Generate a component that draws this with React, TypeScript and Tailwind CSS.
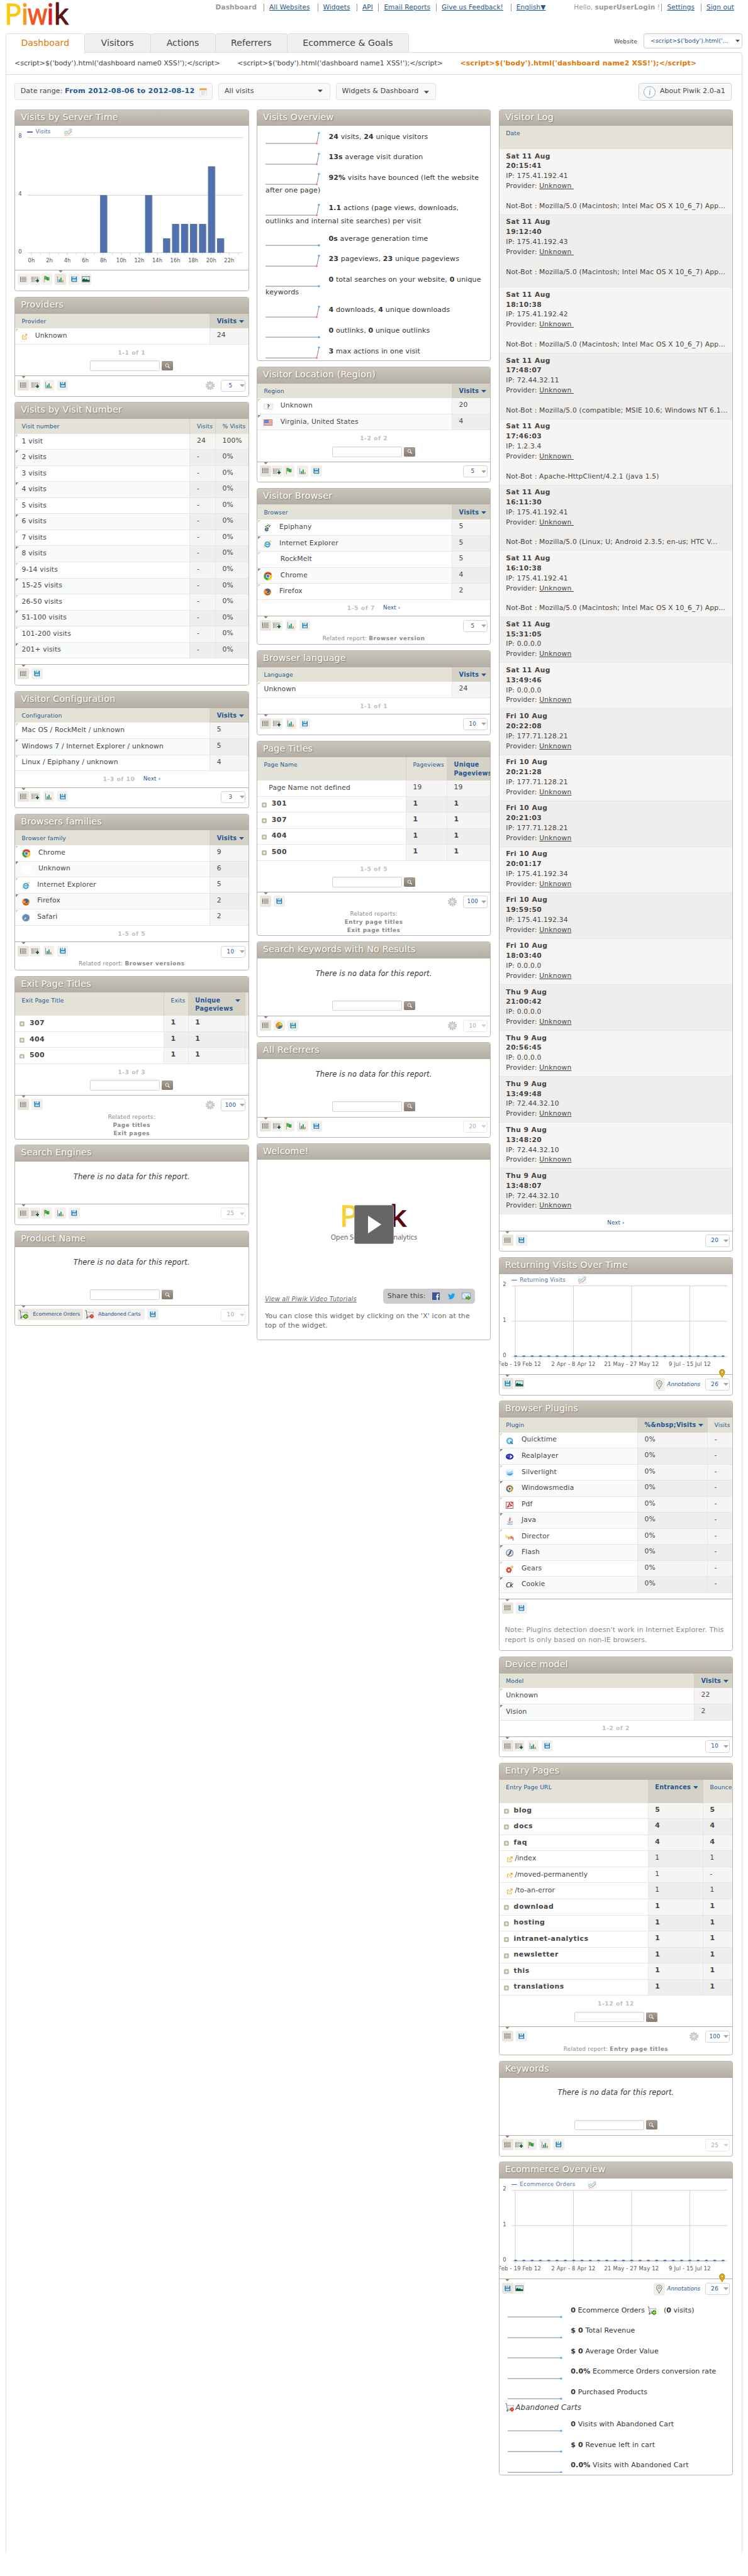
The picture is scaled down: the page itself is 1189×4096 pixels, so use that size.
import React from "react";
import type { ReactNode } from "react";

/* ---------- small drawings ---------- */

const ListIcon = () => (
  <svg width="12" height="10" viewBox="0 0 12 10">
    {[0, 2, 4, 6, 8].map((y) => (
      <g key={y}>
        <rect x="0" y={y + 0.3} width="1.2" height="1.2" fill="#222" />
        <rect x="2" y={y + 0.4} width="10" height="1" fill="#8b7f76" />
      </g>
    ))}
  </svg>
);
const ListPlusIcon = () => (
  <svg width="14" height="12" viewBox="0 0 14 12">
    {[1, 3, 5, 7, 9].map((y) => (
      <g key={y}>
        <rect x="0.5" y={y + 0.3} width="1.2" height="1.2" fill="#222" />
        <path d={`M2.7 ${y + 0.9}H${y > 4 ? 7 : 13}`} stroke="#8b7f76" strokeWidth="1" strokeDasharray="2.4 .7" />
      </g>
    ))}
    <path d="M10.8 5.2v6.2M7.7 8.3h6.2" stroke="#00502a" strokeWidth="2.1" />
  </svg>
);
const FlagIcon = () => (
  <svg width="12" height="13" viewBox="0 0 12 13">
    <path d="M1.5 0.5V12.5" stroke="#c3a57c" strokeWidth="1.3" />
    <path d="M2.2 1.2C4 .2 5 1 6.400 2.400C7.600 3.400 9 3.400 10.800 2.600V8.400C9 9.600 7.400 9.200 6 8.200C4.600 7.200 3.600 7 2.200 7.800Z" fill="#49b04b" />
    <path d="M6.400 3v5.400l1.800.8V3.600Z" fill="#2c8f3a" />
  </svg>
);
const BarIcon = () => (
  <svg width="12" height="12" viewBox="0 0 12 12">
    <path d="M.6 0.500V11.300H12" stroke="#8b7f76" strokeWidth="1" fill="none" />
    <rect x="2.600" y="6" width="2.200" height="4.600" fill="#0d8fd0" />
    <rect x="5.600" y="3" width="2.200" height="7.600" fill="#2ea150" />
    <rect x="9" y="7.600" width="2" height="3" fill="#f0811c" />
  </svg>
);
const SaveIcon = () => (
  <svg width="11" height="11" viewBox="0 0 11 11">
    <path d="M.5.500H2.500V4H8.300V.500H10.500V10.500H1.600L.5 9.400Z" fill="#1185c4" />
    <rect x="4.300" y=".5" width="1.300" height="2.300" fill="#1185c4" />
    <rect x="2.200" y="5.800" width="6.800" height="3.500" fill="#d6d3cb" />
  </svg>
);
const ImageIcon = () => (
  <svg width="15" height="11" viewBox="0 0 15 11">
    <rect x=".6" y=".6" width="13.800" height="9.800" fill="#c4e6f6" stroke="#94887c" strokeWidth="1.200" />
    <path d="M1.200 6.500L4 4.300L6.500 6.500L8.500 5L11 7.500L13.800 6.500V9.900H1.200Z" fill="#0a5a34" />
  </svg>
);
const PieIcon = () => (
  <svg width="13" height="13" viewBox="0 0 13 13">
    <circle cx="6.500" cy="6.500" r="5.700" fill="#f79320" stroke="#8d7a52" strokeWidth=".8" />
    <path d="M6.500 6.500V.900A5.600 5.600 0 0 1 12 6.500Z" fill="#f6cf1e" />
    <path d="M6.500 6.500H12A5.600 5.600 0 0 1 4 11.500Z" fill="#1380b8" />
  </svg>
);
const PinIcon = ({ gold }: { gold?: boolean }) => (
  <svg width="11" height="16" viewBox="0 0 11 16">
    <path
      d="M5.500 15.200C4.600 12 .7 8.800 .7 5.300A4.800 4.800 0 0 1 10.300 5.300C10.300 8.800 6.400 12 5.500 15.200Z"
      fill={gold ? "#e3ad07" : "#fff"}
      stroke={gold ? "#a97c05" : "#555"}
    />
    <circle cx="5.500" cy="5.200" r="2.100" fill="#fff" stroke={gold ? "#a97c05" : "#666"} strokeWidth=".9" />
    {!gold && <path d="M2 8l3.500 3L9 8" stroke="#aaa" fill="none" strokeWidth=".8" />}
  </svg>
);
const GearIcon = () => (
  <svg width="16" height="16" viewBox="0 0 16 16">
    <circle cx="8" cy="8" r="6.700" fill="none" stroke="#b9b9b9" strokeWidth="2.400" strokeDasharray="2.500 1.700" />
    <circle cx="8" cy="8" r="4.600" fill="#e3e3e3" stroke="#c4c4c4" strokeWidth="2" />
    <circle cx="8" cy="8" r="2" fill="#fff" stroke="#bbb" strokeWidth=".7" />
  </svg>
);
const CartIcon = ({ bad }: { bad?: boolean }) => (
  <svg width="17" height="16" viewBox="0 0 17 16" className="shrink-0">
    <path d="M.5 1H2.500L4 12.500H9" fill="none" stroke="#5a5f66" strokeWidth="1.100" />
    <path d="M3 4H15.500L14.500 10H4Z" fill="#eef1f4" stroke="#8a929b" strokeWidth="1" strokeDasharray="1.500 .7" />
    <circle cx="3.800" cy="14" r="1.500" fill="#777" />
    {bad ? (
      <>
        <path d="M10 9.200l4.600 4.600M14.600 9.200l-4.600 4.600" stroke="#b3200e" strokeWidth="4.200" />
        <path d="M10 9.200l4.600 4.600M14.600 9.200l-4.600 4.600" stroke="#f4604a" strokeWidth="2" />
      </>
    ) : (
      <>
        <path d="M12.300 7.300v8.400M8.100 11.500h8.400" stroke="#0b7a0b" strokeWidth="4" />
        <path d="M12.300 8.300v6.400M9.100 11.500h6.400" stroke="#b6e61c" strokeWidth="1.800" />
      </>
    )}
  </svg>
);
const EvoIcon = () => (
  <svg width="16" height="16" viewBox="0 0 16 16">
    <path d="M.6 2L12.500 .8 15.400 3 15.400 13.600 2.500 15.300Z" fill="#fafafa" stroke="#ddd" strokeWidth=".7" />
    <path d="M1 8.500L5 6.500 8 7.500 13 2.500 15 3.500" stroke="#a6d58e" strokeWidth="1.500" fill="none" />
    <path d="M1.500 11L6 9.500 10 10.500 15 6.500" stroke="#8fc4ef" strokeWidth="1.400" fill="none" />
    <path d="M2 14L6 12.800 9 12.500 12 9 14 4" stroke="#f3a982" strokeWidth="1.200" fill="none" />
  </svg>
);
const LinkIcon = () => (
  <svg width="10" height="10" viewBox="0 0 10 10">
    <path d="M4.500 2.500H.7V9.300H7.500V6" fill="none" stroke="#e9b13a" strokeWidth="1.200" />
    <path d="M6 .7H9.400V4M9 1L4.500 5.500" fill="none" stroke="#e9a51f" strokeWidth="1.200" />
    <path d="M2.500 4.500h2.500v2.500h-2.500z" fill="#f7dfa6" />
  </svg>
);
const PlusBox = () => (
  <svg width="9" height="9" viewBox="0 0 9 9">
    <rect width="9" height="9" rx="2" fill="#bfbba4" />
    <path d="M4.500 2v5M2 4.500h5" stroke="#fff" strokeWidth="1.200" />
  </svg>
);
const ChromeIcon = () => (
  <svg width="16" height="16" viewBox="0 0 16 16">
    <circle cx="8" cy="8" r="7.500" fill="#f9c921" />
    <path d="M8 8L1.500 4.200A7.500 7.500 0 0 1 14.800 4.800Z" fill="#e23a2c" />
    <path d="M8 8L1.500 4.200A7.500 7.500 0 0 0 7 15.450L10.500 9Z" fill="#37a748" />
    <circle cx="8" cy="8" r="3.600" fill="#fff" />
    <circle cx="8" cy="8" r="2.800" fill="#3f7fd8" />
  </svg>
);
const IEIcon = () => (
  <svg width="14" height="14" viewBox="0 0 14 14">
    <path d="M11 9.200A4.300 4.300 0 1 1 11.300 7.300H4.500" fill="none" stroke="#2ea3e8" strokeWidth="2.300" />
    <path d="M1.500 12.800C-.5 10 5 2.500 12.800 1.200C13.600 2 13 3.300 12.400 4" fill="none" stroke="#f3b61f" strokeWidth="1.100" />
  </svg>
);
const FirefoxIcon = () => (
  <svg width="14" height="14" viewBox="0 0 14 14">
    <circle cx="7" cy="7" r="6.500" fill="#e0731c" />
    <circle cx="7.500" cy="5.500" r="4" fill="#3a64a8" />
    <path d="M1 5C3 4 4.500 5 6.500 5.200C8 6.500 6 7.500 5.500 8.500C8 10 10.500 9 11.500 6C12.500 9.500 10 12.500 7 13C3 12.800 .8 9 1 5Z" fill="#ef9a28" />
    <path d="M3 9.500C5 12 9 12 11 10" stroke="#a83c12" strokeWidth="1.300" fill="none" />
  </svg>
);
const SafariIcon = () => (
  <svg width="14" height="14" viewBox="0 0 14 14">
    <circle cx="7" cy="7" r="6.200" fill="#4f93cf" stroke="#8d949b" strokeWidth="1.300" />
    <path d="M10.500 3L8 8 6 6Z" fill="#dc5a4a" />
    <path d="M3.500 11L8 8 6 6Z" fill="#eee" />
  </svg>
);
const EpiphanyIcon = () => (
  <svg width="14" height="14" viewBox="0 0 14 14">
    <path d="M8.500 11.500C5 13.500 2 11.500 3.200 8.800C4 7 8 6.500 8.300 8.600C8 10 5.500 10 4.500 9.500" fill="none" stroke="#3c5560" strokeWidth="1.700" />
    <path d="M3 5.500l2-1.500M5.500 4l2-1.500M8 3l2-1.500" stroke="#4e9a3a" strokeWidth="1.900" />
    <path d="M9 6l3.500-4" stroke="#3c5560" strokeWidth="1.300" />
  </svg>
);
const BlankIcon = () => <span className="block h-[16px] w-[16px] bg-white" />;
const UnknownFlag = () => (
  <span className="flex h-[11px] w-[16px] items-center justify-center border border-[#ddd] bg-[#f6f6f6] text-[9px] font-bold leading-none tracking-normal text-[#444]">
    ?
  </span>
);
const USFlag = () => (
  <svg width="16" height="11" viewBox="0 0 16 11">
    <rect width="16" height="11" fill="#fff" />
    {[0, 2, 4, 6, 8, 10].map((y) => (
      <rect key={y} y={y} width="16" height="1" fill={y % 10 === 0 ? "#d9542e" : "#e8503c"} />
    ))}
    <rect x="1" y="1" width="8" height="5.500" fill="#4a7be0" />
    <path d="M1.500 2.500H9M1.500 4.500H9" stroke="#cfdcf8" strokeWidth=".7" strokeDasharray="1 1" />
    <rect x=".3" y=".3" width="15.400" height="10.400" fill="none" stroke="#c9674a" strokeWidth=".6" />
  </svg>
);

const plugin: Record<string, ReactNode> = {
  Quicktime: (
    <>
      <circle cx="7" cy="7" r="4.800" fill="#cfeaf8" stroke="#5fb2d9" strokeWidth="2.600" />
      <path d="M8 8l4.500 4.500" stroke="#2f87b5" strokeWidth="2.500" />
    </>
  ),
  Realplayer: (
    <>
      <ellipse cx="7" cy="7" rx="7" ry="5.300" fill="#2a2fa8" />
      <path d="M7.500 3.500L12 7 7.500 10.500Z" fill="#fff" />
      <path d="M1.500 6C3.500 3 7 3 8.500 6C7.500 9 3.500 9 1.500 6Z" fill="#4c54d8" />
    </>
  ),
  Silverlight: (
    <>
      <rect width="14" height="14" fill="#e4f3fc" />
      <path d="M.5 4L6 6 13.500 2.500 10 8 4 9Z" fill="#8fcdf2" />
      <path d="M1 8C4 9 10 9 13.500 6C12 12 6 14 1 8Z" fill="#3e9fdc" />
    </>
  ),
  Windowsmedia: (
    <>
      <circle cx="7" cy="7" r="6.300" fill="#e9a21c" />
      <path d="M7 .7A6.300 6.300 0 0 0 .7 7H7Z" fill="#d9532c" />
      <path d="M.7 7A6.300 6.300 0 0 0 7 13.300V7Z" fill="#2f68b8" />
      <path d="M7 .7A6.300 6.300 0 0 1 13.300 7H7Z" fill="#69a83a" />
      <circle cx="7" cy="7" r="4" fill="#f4f4f4" stroke="#666" strokeWidth=".7" />
      <path d="M5.800 4.800L9.500 7 5.800 9.200Z" fill="#333" />
    </>
  ),
  Pdf: (
    <>
      <rect x=".7" y="1.500" width="12.600" height="11.500" fill="#f8e9e9" stroke="#b06a70" strokeWidth="1.200" />
      <path d="M2.500 11C5 8 6.500 5 6.500 2.500C7 6 9 8 12 8C8 8 5 9 2.500 11ZM9 1l3 2-2 2" fill="none" stroke="#b5303a" strokeWidth="1.300" />
    </>
  ),
  Java: (
    <>
      <path d="M7.500 .5C8.500 3 4.500 4 6.500 7.500M9.500 3C7 4 8.500 5.500 7.500 7.500" fill="none" stroke="#dd6150" strokeWidth="1.300" />
      <path d="M3.500 8.500C5 9.500 8.500 9.500 10 8.500M4 10.500C6 11.500 8 11.500 10 10.500M2 12.500C5 14 10 14 12.500 12.500M10.500 8C13 8 12 10 10.500 10.300" fill="none" stroke="#7d88b8" strokeWidth="1.100" />
    </>
  ),
  Director: (
    <>
      <path d="M.7 2.500v6M3 5v4" stroke="#f2c500" strokeWidth="1.300" />
      <path d="M5.200 6v5M7.500 6v4" stroke="#f08019" strokeWidth="1.300" />
      <path d="M9.500 5v5M11.500 5v5M13.300 7v6" stroke="#d22b20" strokeWidth="1.200" />
    </>
  ),
  Flash: (
    <>
      <circle cx="7" cy="7" r="6.200" fill="#dce6ee" stroke="#6f8190" strokeWidth="1.300" />
      <path d="M10.500 3C7 3 7.500 7 6.500 9C6 10.300 5 10.800 3.800 10.800M6.500 7H9.500" fill="none" stroke="#33414d" strokeWidth="1.700" />
    </>
  ),
  Gears: (
    <>
      <circle cx="5.500" cy="8.500" r="3.200" fill="#fff" stroke="#dd4434" strokeWidth="2.400" />
      <circle cx="5.500" cy="8.500" r="4.700" fill="none" stroke="#dd4434" strokeWidth="1.400" strokeDasharray="2 1.700" />
      <circle cx="11.300" cy="3" r="1.600" fill="#fff" stroke="#edb63a" strokeWidth="1.500" />
    </>
  ),
};
const PluginIcon = ({ name }: { name: string }) =>
  name === "Cookie" ? (
    <span className="block w-[14px] text-[11px] italic leading-none tracking-[-0.8px] text-black">Ck</span>
  ) : (
    <svg width="14" height="14" viewBox="0 0 14 14">
      {plugin[name]}
    </svg>
  );

/* ---------- widget pieces ---------- */

const Tri = ({ className }: { className: string }) => (
  <svg width="9" height="5" viewBox="0 0 9 5" className={className}>
    <path d="M0 0H9L4.500 5Z" fill="currentColor" />
  </svg>
);

function Widget({ title, size, children }: { title: string; size: string; children: ReactNode }) {
  return (
    <section className={`mb-[10px] flex flex-col overflow-hidden rounded-[4px] border border-[#b9b5a8] bg-white ${size}`}>
      <h2 className="h-[29px] shrink-0 bg-linear-to-b from-[#cbc6bb] to-[#b3ada4] pl-[10.500px] text-[16.200px] leading-[26px] tracking-[0.220px] text-white [text-shadow:1px_1px_2px_#7b7363]">
        {title}
      </h2>
      {children}
    </section>
  );
}

const icons: Record<string, ReactNode> = {
  list: <ListIcon />,
  plus: <ListPlusIcon />,
  flag: <FlagIcon />,
  bar: <BarIcon />,
  save: <SaveIcon />,
  image: <ImageIcon />,
  pie: <PieIcon />,
};

const Limit = ({ value, dim }: { value: string; dim?: boolean }) => (
  <div className={`flex h-[22px] w-[44px] items-center rounded-[4px] border border-[#d4d4d4] text-[#255792] ${dim ? "opacity-50" : ""}`}>
    <span className="w-[32px] text-center text-[10px] tracking-[0.300px]">{value}</span>
    <Tri className="text-[#a5a5a5]" />
  </div>
);

function Footer({
  groups,
  active = "list",
  limit,
  dim,
  gear,
  notes,
  related,
}: {
  groups: string[][];
  active?: string;
  limit?: string;
  dim?: boolean;
  gear?: boolean;
  notes?: boolean;
  related?: [string, ...string[]];
}) {
  return (
    <div className="shrink-0 border-t border-[#b5b0a3]">
      <div className="flex h-[32px] items-start pl-[5px] pr-[5px] pt-[6px]">
        <div className="flex gap-[5px]">
          {groups.map((g, i) => (
            <div key={i} className="flex gap-[1px]">
              {g.map((n) => (
                <span
                  key={n}
                  className={`relative flex h-[20px] w-[20px] items-center justify-center rounded-[2px] ${n === active ? "bg-[#e8e6dd]" : "bg-[#f2f0ec]"}`}
                >
                  {n === active && <Tri className="absolute left-[6px] top-[-6px] h-[4px] w-[8px] text-[#8d8676]" />}
                  {icons[n]}
                </span>
              ))}
            </div>
          ))}
        </div>
        <div className="ml-auto flex items-center">
          {gear && (
            <span className="mr-[12px]">
              <GearIcon />
            </span>
          )}
          {notes && (
            <div className="relative mr-[9px] flex items-center gap-[4px]">
              <span className="flex h-[23px] w-[20px] items-center justify-center bg-[#f2f0ec]">
                <PinIcon />
              </span>
              <span className="w-[60px] text-[10px] italic tracking-normal text-[#255792]">Annotations</span>
              <span className="absolute left-[118px] top-[-17px]">
                <PinIcon gold />
              </span>
            </div>
          )}
          {limit && <Limit value={limit} dim={dim} />}
        </div>
      </div>
      {related && (
        <div className="text-center text-[10px] leading-[14.500px] tracking-[0.330px] text-[#888]">
          {related.length === 2 ? (
            <>
              {related[0]} <b className="tracking-[0.670px]">{related[1]}</b>
            </>
          ) : (
            related.map((r, i) => (
              <div key={r} className={i ? "font-bold tracking-[0.670px]" : ""}>
                {r}
              </div>
            ))
          )}
        </div>
      )}
    </div>
  );
}

const Pages = ({ text, next }: { text?: string; next?: boolean }) => (
  <div className="flex h-[29px] shrink-0 items-center justify-center gap-[15px]">
    {text && <span className="text-[10.500px] font-bold tracking-[0.580px] text-[#c0c0c0]">{text}</span>}
    {next && <span className="text-[10px] tracking-[0.100px] text-[#255792]">Next ›</span>}
  </div>
);

const Search = () => (
  <div className="flex h-[27px] shrink-0 items-start justify-center gap-[3px]">
    <span className="h-[19px] w-[126px] rounded-[2px] border border-[#d8d5c8] bg-white shadow-[inset_0_1px_2px_#eee]" />
    <span className="mt-[1px] flex h-[17px] w-[21px] items-center justify-center rounded-[2px] bg-linear-to-b from-[#a89e92] to-[#857b6e]">
      <svg width="10" height="9" viewBox="0 0 10 9">
        <circle cx="4" cy="3.500" r="2.800" fill="none" stroke="#fff" strokeWidth="1" />
        <path d="M6 5.500L9 8.300" stroke="#fff" strokeWidth="1.500" />
      </svg>
    </span>
  </div>
);

const NoData = ({ search }: { search?: boolean }) => (
  <>
    <p className="h-[76px] shrink-0 pt-[18px] text-center text-[13px] italic leading-[20px] tracking-[0.190px] text-[#333]">
      There is no data for this report.
    </p>
    {search && (
      <div className="h-[28px] shrink-0">
        <Search />
      </div>
    )}
  </>
);

type Col = { label: string; sorted?: boolean; wide?: string };

function Head({ cols, grid, tall }: { cols: Col[]; grid: string; tall?: boolean }) {
  return (
    <div className={`grid shrink-0 ${grid} ${tall ? "h-[42px]" : "h-[27px]"}`}>
      {cols.map((c, i) => (
        <div
          key={i}
          className={`flex items-start overflow-hidden pl-[12px] pt-[6px] text-[10.500px] leading-[15px] tracking-[0.120px] text-[#255792] ${
            i ? "border-l border-[#d3d0c5]" : ""
          } ${c.sorted ? "bg-[#d4d1c6]" : "bg-[#e4e2d7]"}`}
        >
          <span className={`whitespace-pre-line ${c.sorted ? "text-[11px] font-bold tracking-[0.300px]" : "whitespace-nowrap"}`}>{c.label}</span>
          {c.sorted && <Tri className={`mt-[6px] shrink-0 ${c.wide ?? "ml-[4px]"}`} />}
        </div>
      ))}
    </div>
  );
}

type Row = { name: string; vals: string[]; icon?: ReactNode; iconW?: string; bold?: boolean; indent?: string };

function Rows({ rows, grid, sub }: { rows: Row[]; grid: string; sub?: boolean }) {
  return (
    <div className="shrink-0">
      {rows.map((r, i) => {
        const odd = i % 2 === 1;
        return (
          <div
            key={i}
            className={`relative grid h-[29px] leading-[26px] text-[#444] ${grid} ${
              r.bold ? "text-[12.400px] font-bold tracking-[0.580px]" : "text-[12.200px] tracking-[0.200px]"
            }`}
          >
            {!sub && (
              <svg width="5" height="5" viewBox="0 0 5 5" className="absolute left-[1px] top-[1px]">
                <path d="M0 0H5L0 5Z" fill={odd ? "#8d8676" : "#d9d6c9"} />
              </svg>
            )}
            <div className={`flex items-center whitespace-pre border-b border-[#e6e6e6] ${r.indent ?? "pl-[12px]"} ${odd && !sub ? "bg-[#f9fafa]" : "bg-white"}`}>
              {r.icon && <span className={`mt-[2px] shrink-0 ${r.iconW ?? "w-[28px]"}`}>{r.icon}</span>}
              {r.name}
            </div>
            {r.vals.map((v, j) => (
              <div key={j} className={`overflow-hidden border-b border-l border-[#e6e6e6] pl-[12px] ${odd ? "bg-[#efeeec]" : "bg-[#f6f5f3]"}`}>
                {v}
              </div>
            ))}
          </div>
        );
      })}
    </div>
  );
}

const G2 = "grid-cols-[351px_minmax(0,1fr)]";
const std = [["list", "plus"], ["bar"], ["save"]];
const withFlag = [["list", "plus", "flag"], ["bar"], ["save"]];
const simple = [["list"], ["save"]];

/* ---------- charts ---------- */

const hourly: [number, number][] = [
  [8, 4],
  [13, 4],
  [15, 1],
  [16, 2],
  [17, 2],
  [18, 2],
  [19, 2],
  [20, 6],
  [21, 1],
];

const Legend = ({ label, gap }: { label: string; gap: string }) => (
  <div className={`absolute left-[22px] top-[3px] flex h-[16px] items-center text-[10px] text-[#5170ae] ${gap}`}>
    <span className="flex items-center">
      <span className="mr-[5px] h-[2px] w-[10px] bg-[#5170ae]" />
      {label}
    </span>
    <EvoIcon />
  </div>
);

function HourChart() {
  return (
    <div className="relative h-[260px] shrink-0">
      <Legend label="Visits" gap="gap-[23px] tracking-[0.100px]" />
      <svg width="421" height="260" viewBox="0 0 421 260" className="text-[9.500px] tracking-normal">
        {[21.2, 125.4, 229.2].map((y) => (
          <path key={y} d={`M22 ${y}H411`} stroke="#ccc" />
        ))}
        {[["8", 22], ["4", 126], ["0", 230]].map(([t, y]) => (
          <text key={t} x="6" y={y} fill="#545454">
            {t}
          </text>
        ))}
        {Array.from({ length: 24 }, (_, i) => (
          <path key={i} d={`M${29.4 + i * 16.23} 229.200v${i % 2 ? 3.5 : 5}`} stroke="#ccc" />
        ))}
        {hourly.map(([h, v]) => (
          <g key={h}>
            <rect x={24.6 + h * 16.23} y={229.2 - v * 26 + 0.6} width="12.500" height={v * 26 - 0.6} fill="#bfbfc4" />
            <rect x={23.6 + h * 16.23} y={229.2 - v * 26} width="12.500" height={v * 26} fill="#5170ae" />
          </g>
        ))}
        {Array.from({ length: 12 }, (_, i) => (
          <text key={i} x={29.4 + i * 32.46} y="246" textAnchor="middle" fill="#545454">
            {i * 2}h
          </text>
        ))}
      </svg>
    </div>
  );
}

function FlatChart({ label }: { label: string }) {
  return (
    <div className="relative h-[181px] shrink-0">
      <Legend label={label} gap="gap-[22px] tracking-[0.270px]" />
      <svg width="421" height="180" viewBox="0 0 421 180" className="text-[9.500px] tracking-[0.250px]">
        {[21.2, 85, 149].map((y) => (
          <path key={y} d={`M22 ${y}H411`} stroke="#ccc" />
        ))}
        {[28.4, 133.4, 238.4, 343.4].map((x) => (
          <path key={x} d={`M${x} 21.200V154`} stroke="#ccc" />
        ))}
        {[["2", 22], ["1", 86], ["0", 150]].map(([t, y]) => (
          <text key={t} x="6" y={y} fill="#545454">
            {t}
          </text>
        ))}
        <path d="M29 148.500H404" stroke="#8fa3cc" strokeWidth="1" />
        {Array.from({ length: 26 }, (_, i) => (
          <g key={i}>
            <path d={`M${29 + i * 14.98} 149v4`} stroke="#ccc" />
            <path d={`M${26 + i * 14.98} 149a3 2.500 0 0 1 6 0Z`} fill="#5170ae" />
          </g>
        ))}
        {[
          ["13 Feb - 19 Feb 12", 28.5],
          ["2 Apr - 8 Apr 12", 133.4],
          ["21 May - 27 May 12", 238.4],
          ["9 Jul - 15 Jul 12", 343.4],
        ].map(([t, x]) => (
          <text key={t} x={x} y="165.500" textAnchor="middle" fill="#545454">
            {t}
          </text>
        ))}
      </svg>
    </div>
  );
}

const Spark = ({ up }: { up?: boolean }) => (
  <svg width="100" height="26" viewBox="0 0 100 26" className="mr-[14px] shrink-0">
    <path d={up ? "M0 24H92.500L96.500 5.500" : "M0 24H97"} fill="none" stroke="#6f849c" strokeWidth="1.100" />
    {up && <path d="M92.500 22L94.700 24 92.500 26 90.300 24Z" fill="#f77" />}
    <path d={up ? "M96.500 3L99 5.200 96.500 7.400 94 5.200Z" : "M96.500 21.700L99 24 96.500 26.300 94 24Z"} fill="#55aaff" />
  </svg>
);

const Metric = ({ up, rest, children }: { up?: boolean; rest?: string; children: ReactNode }) => (
  <div className="mb-[11px] pl-[15px] text-[12.500px] tracking-[0.160px] text-[#333]">
    <div className="flex h-[26px] items-center whitespace-pre">
      <Spark up={up} />
      <span className="-mt-[1px]">{children}</span>
    </div>
    {rest && <div className="h-[18px] whitespace-nowrap leading-[18px]">{rest}</div>}
  </div>
);

/* ---------- visitor log ---------- */

const mac = "Mozilla/5.0 (Macintosh; Intel Mac OS X 10_6_7) App...";
const log: [string, string, string, string?][] = [
  ["Sat 11 Aug", "20:15:41", "175.41.192.41", mac],
  ["Sat 11 Aug", "19:12:40", "175.41.192.43", mac],
  ["Sat 11 Aug", "18:10:38", "175.41.192.42", mac],
  ["Sat 11 Aug", "17:48:07", "72.44.32.11", "Mozilla/5.0 (compatible; MSIE 10.6; Windows NT 6.1..."],
  ["Sat 11 Aug", "17:46:03", "1.2.3.4", "Apache-HttpClient/4.2.1 (java 1.5)"],
  ["Sat 11 Aug", "16:11:30", "175.41.192.41", "Mozilla/5.0 (Linux; U; Android 2.3.5; en-us; HTC V..."],
  ["Sat 11 Aug", "16:10:38", "175.41.192.41", mac],
  ["Sat 11 Aug", "15:31:05", "0.0.0.0"],
  ["Sat 11 Aug", "13:49:46", "0.0.0.0"],
  ["Fri 10 Aug", "20:22:08", "177.71.128.21"],
  ["Fri 10 Aug", "20:21:28", "177.71.128.21"],
  ["Fri 10 Aug", "20:21:03", "177.71.128.21"],
  ["Fri 10 Aug", "20:01:17", "175.41.192.34"],
  ["Fri 10 Aug", "19:59:50", "175.41.192.34"],
  ["Fri 10 Aug", "18:03:40", "0.0.0.0"],
  ["Thu 9 Aug", "21:00:42", "0.0.0.0"],
  ["Thu 9 Aug", "20:56:45", "0.0.0.0"],
  ["Thu 9 Aug", "13:49:48", "72.44.32.10"],
  ["Thu 9 Aug", "13:48:20", "72.44.32.10"],
  ["Thu 9 Aug", "13:48:07", "72.44.32.10"],
];

function VisitorLog() {
  return (
    <div className="shrink-0">
      {log.map(([d, t, ip, bot], i) => (
        <div
          key={i}
          className={`border-b border-[#e8e8e8] pl-[12px] pt-[4px] text-[12.200px] leading-[18px] tracking-[0.220px] text-[#444] ${
            !bot ? "h-[83px]" : i === 1 ? "h-[131px]" : "h-[119px]"
          } ${i % 2 ? "bg-[#efeeec]" : "bg-[#f6f5f3]"}`}
        >
          <div className="font-bold tracking-[0.500px]">{d}</div>
          <div className="font-bold tracking-[0.500px]">{t}</div>
          <div>IP: {ip}</div>
          <div className="whitespace-pre">
            Provider: <u>{bot ? "Unknown " : "Unknown"}</u>
          </div>
          {bot && <div className="mt-[18px] whitespace-nowrap">Not-Bot : {bot}</div>}
        </div>
      ))}
    </div>
  );
}

/* ---------- header ---------- */

const Logo = () => (
  <svg width="116" height="42" viewBox="0 0 116 42" className="absolute left-[10px] top-[4px] overflow-visible" fontFamily="Open Sans" fontSize="52" letterSpacing="0" strokeWidth="1.400" strokeLinejoin="round">
    <text x="-2" y="39.500" textLength="31" lengthAdjust="spacingAndGlyphs" fill="#fbc90a" stroke="#fbc90a">P</text>
    <text x="28" y="39.500" fill="#f39a1a" stroke="#f39a1a">i</text>
    <text x="40" y="39.500" textLength="35" lengthAdjust="spacingAndGlyphs" fill="#f4551e" stroke="#f4551e">w</text>
    <text x="74" y="39.500" fill="#d41f2a" stroke="#d41f2a">i</text>
    <text x="87" y="39.500" textLength="27" lengthAdjust="spacingAndGlyphs" fill="#5c1417" stroke="#5c1417">k</text>
  </svg>
);

const topLinks: [string, string][] = [
  ["All Websites", "w-[97px]"],
  ["Widgets", "w-[71px]"],
  ["API", "w-[39px]"],
  ["Email Reports", "w-[104px]"],
  ["Give us Feedback!", "w-[135px]"],
  ["English▼", "w-[104px]"],
];

function TopBar() {
  const link = "h-[13px] border-l border-[#999] pl-[9px]";
  return (
    <div className="relative h-[60px]">
      <Logo />
      <div className="ml-[389px] flex pt-[7px] text-[12px] leading-[13px] tracking-[0.050px] text-[#255792]">
        <b className="w-[87px] tracking-[0.150px] text-[#999]">Dashboard</b>
        {topLinks.map(([t, w]) => (
          <span key={t} className={`${link} ${w} whitespace-nowrap`}>
            <u>{t}</u>
          </span>
        ))}
        <span className="w-[178px] whitespace-nowrap pl-[10px] tracking-[-0.050px] text-[#999]">
          Hello, <b className="tracking-[0.200px]">superUserLogin</b> !
        </span>
        <span className={`${link} -ml-[10px] w-[71px]`}>
          <u>Settings</u>
        </span>
        <span className={`${link} whitespace-nowrap`}>
          <u>Sign out</u>
        </span>
      </div>
    </div>
  );
}

const tabs: [string, string][] = [
  ["Visitors", "w-[119px]"],
  ["Actions", "w-[117px]"],
  ["Referrers", "w-[130px]"],
  ["Ecommerce & Goals", "w-[219px]"],
];

function Tabs() {
  return (
    <div className="flex h-[34px] items-stretch pl-[10px] text-[16px] leading-[34px] tracking-[0.050px]">
      <div className="relative z-10 -mb-[2px] w-[143px] rounded-t-[4px] border border-b-0 border-[#ddd] bg-white text-center text-[#e87500]">
        Dashboard
      </div>
      {tabs.map(([t, w]) => (
        <div key={t} className={`${w} rounded-t-[4px] border border-b-0 border-l-0 border-[#ddd] bg-[#f1f0f0] text-center text-[#444]`}>
          {t}
        </div>
      ))}
      <div className="ml-auto mr-[10px] flex items-start text-[10.400px] tracking-[0.050px] text-[#444]">
        <span className="mr-[12px] leading-[30px]">Website</span>
        <span className="flex h-[28px] w-[178px] items-center justify-between rounded-[4px] border border-[#ccc] bg-linear-to-b from-[#f3f3f3] to-white to-30% pl-[11px] pr-[4px] leading-none text-[#255792]">
          <span className="text-[10.700px] tracking-normal">{"<script>$('body').html('..."}</span>
          <Tri className="h-[7px] w-[8px] text-[#444]" />
        </span>
      </div>
    </div>
  );
}

function Controls() {
  const box = "flex h-[31px] items-center rounded-[4px] border border-[#e2e2e2] bg-[#f8f8f8] pl-[10px] text-[12.500px] tracking-[0.120px] text-[#444]";
  return (
    <div className="flex h-[62px] pl-[15px] pr-[18px] pt-[15px]">
      <div className={`${box} w-[358px] whitespace-pre pb-[2px]`}>
        Date range: <b className="text-[12.700px] tracking-[0.280px] text-[#255792]">From 2012-08-06 to 2012-08-12</b>
        <svg width="14" height="15" viewBox="0 0 14 15" className="ml-[8px] mt-[3px] shrink-0">
          <rect x=".5" y=".5" width="12.500" height="14" fill="#fff" stroke="#ddd" />
          <rect x=".5" y=".5" width="12.500" height="3.500" fill="#f2a24c" />
          <path d="M3 6.500h8M3 9h8M3 11.500h6" stroke="#bbb" strokeWidth="1.400" strokeDasharray="1.700 .8" />
        </svg>
      </div>
      <div className={`${box} ml-[10px] w-[202px] justify-between pb-[2px] pr-[12px]`}>
        All visits <Tri className="h-[6px] text-[#444]" />
      </div>
      <div className={`${box} ml-[10px] w-[181px] justify-between pb-[2px] pr-[12px]`}>
        Widgets &amp; Dashboard <Tri className="mt-[3px] h-[6px] text-[#444]" />
      </div>
      <div className="ml-auto flex h-[32px] w-[168px] items-center gap-[8px] whitespace-nowrap rounded-[4px] border border-[#c9d6e6] bg-[#f8f8f8] pl-[8px] text-[12.500px] tracking-[0.080px] text-[#444]">
        <span className="flex h-[21px] w-[21px] shrink-0 items-center justify-center rounded-full border border-[#8ea9cc] bg-white font-['Liberation_Serif',serif] text-[16px] italic text-[#7e9cc4]">
          i
        </span>
        <span className="-mt-[2px]">About Piwik 2.0-a1</span>
      </div>
    </div>
  );
}

/* ---------- columns ---------- */

const visitRows = ["1 visit", "2 visits", "3 visits", "4 visits", "5 visits", "6 visits", "7 visits", "8 visits", "9-14 visits", "15-25 visits", "26-50 visits", "51-100 visits", "101-200 visits", "201+ visits"];
const GV = "grid-cols-[315px_46px_minmax(0,1fr)]";
const GX = "grid-cols-[268px_44px_102px_minmax(0,1fr)]";
const GP = "grid-cols-[268px_74px_minmax(0,1fr)]";
const GB = "grid-cols-[249px_126px_minmax(0,1fr)]";
const GE = "grid-cols-[268px_99px_minmax(0,1fr)]";
const plus = { icon: <PlusBox />, iconW: "w-[18px] -mt-[1px]", indent: "pl-[8px]", bold: true };
const page = { icon: <LinkIcon />, iconW: "w-[14px]", indent: "pl-[14px]" };

const ColumnOne = () => (
  <div className="w-[423px]">
    <Widget title="Visits by Server Time" size="h-[329px]">
      <HourChart />
      <Footer groups={[["list", "plus", "flag"], ["bar"], ["save", "image"]]} active="bar" />
    </Widget>
    <Widget title="Providers" size="h-[180px]">
      <Head grid={G2} cols={[{ label: "Provider" }, { label: "Visits", sorted: true }]} />
      <Rows grid={G2} rows={[{ name: "Unknown", vals: ["24"], icon: <LinkIcon />, iconW: "w-[24px]" }]} />
      <Pages text="1-1 of 1" />
      <Search />
      <Footer groups={std} limit="5" gear />
    </Widget>
    <Widget title="Visits by Visit Number" size="h-[512px]">
      <Head grid={GV} cols={[{ label: "Visit number" }, { label: "Visits" }, { label: "% Visits" }]} />
      <Rows grid={GV} rows={visitRows.map((name, i) => ({ name, vals: i ? ["-", "0%"] : ["24", "100%"] }))} />
      <div className="h-[10px]" />
      <Footer groups={simple} />
    </Widget>
    <Widget title="Visitor Configuration" size="h-[211px]">
      <Head grid={G2} cols={[{ label: "Configuration" }, { label: "Visits", sorted: true }]} />
      <Rows
        grid={G2}
        rows={[
          { name: "Mac OS / RockMelt / unknown", vals: ["5"] },
          { name: "Windows 7 / Internet Explorer / unknown", vals: ["5"] },
          { name: "Linux / Epiphany / unknown", vals: ["4"] },
        ]}
      />
      <Pages text="1-3 of 10" next />
      <Footer groups={std} limit="3" />
    </Widget>
    <Widget title="Browsers families" size="h-[283px]">
      <Head grid={G2} cols={[{ label: "Browser family" }, { label: "Visits", sorted: true }]} />
      <Rows
        grid={G2}
        rows={[
          { name: "Chrome", vals: ["9"], icon: <ChromeIcon />, iconW: "w-[30px]" },
          { name: "Unknown", vals: ["6"], icon: <BlankIcon />, iconW: "w-[30px]" },
          { name: "Internet Explorer", vals: ["5"], icon: <IEIcon /> },
          { name: "Firefox", vals: ["2"], icon: <FirefoxIcon /> },
          { name: "Safari", vals: ["2"], icon: <SafariIcon /> },
        ]}
      />
      <Pages text="1-5 of 5" />
      <Footer groups={std} limit="10" related={["Related report:", "Browser versions"]} />
    </Widget>
    <Widget title="Exit Page Titles" size="h-[295px]">
      <Head tall grid={GX} cols={[{ label: "Exit Page Title" }, { label: "Exits" }, { label: "Unique\nPageviews", sorted: true, wide: "ml-[4px]" }, { label: "" }]} />
      <Rows sub grid={GX} rows={["307", "404", "500"].map((name) => ({ name, vals: ["1", "1", ""], ...plus }))} />
      <Pages text="1-3 of 3" />
      <Search />
      <Footer groups={simple} limit="100" gear related={["Related reports:", "Page titles", "Exit pages"]} />
    </Widget>
    <Widget title="Search Engines" size="h-[145px]">
      <NoData />
      <Footer groups={withFlag} limit="25" dim />
    </Widget>
    <Widget title="Product Name" size="h-[172px]">
      <NoData search />
      <div className="flex h-[38px] items-start border-t border-[#b5b0a3] pl-[5px] pr-[5px] pt-[6px] text-[9px] tracking-[-0.060px] text-[#255792]">
        <span className="relative flex h-[20px] w-[118px] items-center gap-[8px] whitespace-nowrap rounded-[2px] bg-[#e8e6dd] pl-[2px]">
          <Tri className="absolute left-[6px] top-[-6px] h-[4px] w-[8px] text-[#8d8676]" />
          <CartIcon />
          Ecommerce Orders
        </span>
        <span className="ml-[1px] flex h-[20px] w-[110px] items-center gap-[7px] whitespace-nowrap rounded-[2px] bg-[#f2f0ec] pl-[2px]">
          <CartIcon bad />
          Abandoned Carts
        </span>
        <span className="ml-[5px] flex h-[20px] w-[20px] items-center justify-center rounded-[2px] bg-[#f2f0ec]">
          <SaveIcon />
        </span>
        <span className="ml-auto">
          <Limit value="10" dim />
        </span>
      </div>
    </Widget>
  </div>
);

const ColumnTwo = () => (
  <div className="w-[423px]">
    <Widget title="Visits Overview" size="h-[455px]">
      <div className="pt-[8px]">
        <Metric up><b>24</b> visits, <b>24</b> unique visitors</Metric>
        <Metric up><b>13s</b> average visit duration</Metric>
        <Metric up rest="after one page)"><b>92%</b> visits have bounced (left the website</Metric>
        <Metric up rest="outlinks and internal site searches) per visit"><b>1.1</b> actions (page views, downloads,</Metric>
        <Metric><b>0s</b> average generation time</Metric>
        <Metric up><b>23</b> pageviews, <b>23</b> unique pageviews</Metric>
        <Metric rest="keywords"><b>0</b> total searches on your website, <b>0</b> unique</Metric>
        <Metric up><b>4</b> downloads, <b>4</b> unique downloads</Metric>
        <Metric><b>0</b> outlinks, <b>0</b> unique outlinks</Metric>
        <Metric up><b>3</b> max actions in one visit</Metric>
      </div>
    </Widget>
    <Widget title="Visitor Location (Region)" size="h-[209px]">
      <Head grid={G2} cols={[{ label: "Region" }, { label: "Visits", sorted: true }]} />
      <Rows
        grid={G2}
        rows={[
          { name: "Unknown", vals: ["20"], icon: <UnknownFlag />, iconW: "w-[30px]" },
          { name: "Virginia, United States", vals: ["4"], icon: <USFlag />, iconW: "w-[30px]" },
        ]}
      />
      <Pages text="1-2 of 2" />
      <Search />
      <Footer groups={withFlag} limit="5" />
    </Widget>
    <Widget title="Visitor Browser" size="h-[283px]">
      <Head grid={G2} cols={[{ label: "Browser" }, { label: "Visits", sorted: true }]} />
      <Rows
        grid={G2}
        rows={[
          { name: "Epiphany", vals: ["5"], icon: <EpiphanyIcon /> },
          { name: "Internet Explorer", vals: ["5"], icon: <IEIcon /> },
          { name: "RockMelt", vals: ["5"], icon: <BlankIcon />, iconW: "w-[30px]" },
          { name: "Chrome", vals: ["4"], icon: <ChromeIcon />, iconW: "w-[30px]" },
          { name: "Firefox", vals: ["2"], icon: <FirefoxIcon /> },
        ]}
      />
      <Pages text="1-5 of 7" next />
      <Footer groups={std} limit="5" related={["Related report:", "Browser version"]} />
    </Widget>
    <Widget title="Browser language" size="h-[153px]">
      <Head grid={G2} cols={[{ label: "Language" }, { label: "Visits", sorted: true }]} />
      <Rows grid={G2} rows={[{ name: "Unknown", vals: ["24"] }]} />
      <Pages text="1-1 of 1" />
      <Footer groups={std} limit="10" />
    </Widget>
    <Widget title="Page Titles" size="h-[353px]">
      <Head tall grid={GP} cols={[{ label: "Page Name" }, { label: "Pageviews" }, { label: "Unique\nPageviews", sorted: true, wide: "ml-[20px]" }]} />
      <Rows
        sub
        grid={GP}
        rows={[
          { name: "Page Name not defined", vals: ["19", "19"], indent: "pl-[21px]" },
          ...["301", "307", "404", "500"].map((name) => ({ name, vals: ["1", "1"], ...plus })),
        ]}
      />
      <Pages text="1-5 of 5" />
      <Search />
      <Footer groups={simple} limit="100" gear related={["Related reports:", "Entry page titles", "Exit page titles"]} />
    </Widget>
    <Widget title="Search Keywords with No Results" size="h-[172px]">
      <NoData search />
      <Footer groups={[["list"], ["pie"], ["save"]]} limit="10" dim gear />
    </Widget>
    <Widget title="All Referrers" size="h-[172px]">
      <NoData search />
      <Footer groups={withFlag} limit="20" dim />
    </Widget>
    <Widget title="Welcome!" size="h-[356px]">
      <div className="relative h-[233px] shrink-0">
        <svg width="421" height="233" viewBox="0 0 421 233" fontFamily="Open Sans" letterSpacing="0">
          <text x="149" y="120" fontSize="52" textLength="33" lengthAdjust="spacingAndGlyphs" fill="#f6d130" stroke="#f6d130" strokeWidth="1.500">P</text>
          <text x="239" y="120" fontSize="52" textLength="30" lengthAdjust="spacingAndGlyphs" fill="#5a0712" stroke="#5a0712" strokeWidth="1.500">k</text>
          <text x="132.500" y="144" fontSize="12.200" textLength="156" fill="#6b4f42">Open Source Web Analytics</text>
        </svg>
        <div className="absolute left-[175px] top-[81px] flex h-[71px] w-[72px] items-center justify-center rounded-[3px] border border-[#999] bg-[#666]">
          <svg width="24" height="32" viewBox="0 0 24 32" className="ml-[3px]">
            <path d="M0 0L24 16 0 32Z" fill="#fff" />
          </svg>
        </div>
      </div>
      <div className="flex pl-[14px]">
        <u className="mt-[11px] w-[213px] whitespace-nowrap text-[11px] italic leading-[15px] tracking-[0.210px] text-[#666]">View all Piwik Video Tutorials</u>
        <div className="flex h-[27px] w-[166px] items-center rounded-[6px] bg-[#ccc] pl-[8px] text-[12.500px] tracking-[0.180px] text-[#444]">
          <span className="w-[81px] whitespace-nowrap">Share this:</span>
          <svg width="14" height="14" viewBox="0 0 14 14" className="mr-[14px]">
            <rect width="14" height="14" fill="#3b5998" />
            <path d="M12 3.500H10.500C9.500 3.500 9.300 4 9.300 5V14M7 7.500H12" stroke="#fff" strokeWidth="2" fill="none" />
          </svg>
          <svg width="13" height="12" viewBox="0 0 24 20" className="mr-[12px]">
            <path d="M24 2.400a10 10 0 0 1-2.800.8A5 5 0 0 0 23.300.500a10 10 0 0 1-3.100 1.200 4.900 4.900 0 0 0-8.400 4.500A14 14 0 0 1 1.700 1 4.900 4.900 0 0 0 3.200 7.600 5 5 0 0 1 1 7a4.900 4.900 0 0 0 3.900 4.800 5 5 0 0 1-2.200.1 4.900 4.900 0 0 0 4.600 3.400A10 10 0 0 1 0 17.500 14 14 0 0 0 21.500 5 10 10 0 0 0 24 2.400Z" fill="#13a5ec" />
          </svg>
          <svg width="17" height="14" viewBox="0 0 17 14">
            <rect x=".5" y="1" width="15" height="10.500" fill="#e9f3fb" stroke="#6f9ac4" />
            <path d="M1 1.500L8 7.500 15 1.500M1 11L6 6M15 11L10 6" fill="none" stroke="#8fb3d6" strokeWidth=".9" />
            <path d="M7 8.500h4.500V6.300L16 10l-4.500 3.700v-2.200H7Z" fill="#5faa32" stroke="#3f7d1c" strokeWidth=".7" />
          </svg>
        </div>
      </div>
      <p className="whitespace-pre-line pl-[14px] pt-[13px] text-[12.500px] leading-[18px] tracking-[0.135px] text-[#666]">
        {"You can close this widget by clicking on the 'X' icon at the\ntop of the widget."}
      </p>
    </Widget>
  </div>
);

const plugins = ["Quicktime", "Realplayer", "Silverlight", "Windowsmedia", "Pdf", "Java", "Director", "Flash", "Gears", "Cookie"];

const ColumnThree = () => (
  <div className="w-[423px]">
    <Widget title="Visitor Log" size="h-[2063px]">
      <Head tall grid="grid-cols-1" cols={[{ label: "Date" }]} />
      <VisitorLog />
      <Pages next />
      <Footer groups={simple} limit="20" />
    </Widget>
    <Widget title="Returning Visits Over Time" size="h-[249px]">
      <FlatChart label="Returning Visits" />
      <Footer groups={[["save", "image"]]} active="save" notes limit="26" />
    </Widget>
    <Widget title="Browser Plugins" size="h-[452px]">
      <Head grid={GB} cols={[{ label: "Plugin" }, { label: "%&nbsp;Visits", sorted: true }, { label: "Visits" }]} />
      <Rows grid={GB} rows={plugins.map((name) => ({ name, vals: ["0%", "-"], icon: <PluginIcon name={name} /> }))} />
      <div className="h-[10px]" />
      <Footer groups={simple} />
      <p className="whitespace-pre-line pl-[10px] pt-[15px] text-[12.500px] leading-[18px] tracking-[0.130px] text-[#888]">
        {"Note: Plugins detection doesn't work in Internet Explorer. This\nreport is only based on non-IE browsers."}
      </p>
    </Widget>
    <Widget title="Device model" size="h-[182px]">
      <Head grid={G2} cols={[{ label: "Model" }, { label: "Visits", sorted: true }]} />
      <Rows grid={G2} rows={[{ name: "Unknown", vals: ["22"] }, { name: "Vision", vals: ["2"] }]} />
      <Pages text="1-2 of 2" />
      <Footer groups={std} limit="10" />
    </Widget>
    <Widget title="Entry Pages" size="h-[528px]">
      <Head tall grid={GE} cols={[{ label: "Entry Page URL" }, { label: "Entrances", sorted: true }, { label: "Bounces" }]} />
      <Rows
        sub
        grid={GE}
        rows={[
          { name: "blog", vals: ["5", "5"], ...plus },
          { name: "docs", vals: ["4", "4"], ...plus },
          { name: "faq", vals: ["4", "4"], ...plus },
          { name: "/index", vals: ["1", "1"], ...page },
          { name: "/moved-permanently", vals: ["1", "-"], ...page },
          { name: "/to-an-error", vals: ["1", "1"], ...page },
          ...["download", "hosting", "intranet-analytics", "newsletter", "this", "translations"].map((name) => ({ name, vals: ["1", "1"], ...plus })),
        ]}
      />
      <Pages text="1-12 of 12" />
      <Search />
      <Footer groups={simple} limit="100" gear related={["Related report:", "Entry page titles"]} />
    </Widget>
    <Widget title="Keywords" size="h-[172px]">
      <NoData search />
      <Footer groups={withFlag} limit="25" dim />
    </Widget>
    <Widget title="Ecommerce Overview" size="h-[566px]">
      <FlatChart label="Ecommerce Orders" />
      <Footer groups={[["save", "image"]]} active="save" notes limit="26" />
      <div className="pt-[12px]">
        <Metric>
          <span className="flex items-center whitespace-pre tracking-[0.060px]">
            <b>0</b> Ecommerce Orders <CartIcon />
            <span className="pl-[13px]">(<b>0</b> visits)</span>
          </span>
        </Metric>
        <Metric><b>$ 0</b> Total Revenue</Metric>
        <Metric><b>$ 0</b> Average Order Value</Metric>
        <Metric><b>0.0%</b> <span className="tracking-[0.050px]">Ecommerce Orders conversion rate</span></Metric>
        <Metric><b>0</b> Purchased Products</Metric>
        <div className="-mt-[6px] mb-[9px] flex h-[18px] items-center gap-[2px] pl-[10px] text-[13.500px] italic tracking-[0.160px] text-[#444]">
          <CartIcon bad />
          Abandoned Carts
        </div>
        <Metric><b>0</b> Visits with Abandoned Cart</Metric>
        <Metric><b>$ 0</b> Revenue left in cart</Metric>
        <Metric><b>0.0%</b> Visits with Abandoned Cart</Metric>
      </div>
    </Widget>
  </div>
);

export default function App() {
  return (
    <div className="h-[4650.500px] w-[1350px] overflow-hidden bg-white font-['DejaVu_Sans',sans-serif] tracking-[0.200px] text-[#444] [zoom:0.8807]">
      <TopBar />
      <Tabs />
      <main className="mx-[10px] h-[4515px] rounded-tr-[4px] border border-b-0 border-[#ddd]">
        <div className="flex h-[40px] items-center gap-[31px] whitespace-nowrap border-b border-[#ddd] pl-[15px] text-[12.500px] tracking-normal">
          <span>{"<script>$('body').html('dashboard name0 XSS!');</script>"}</span>
          <span>{"<script>$('body').html('dashboard name1 XSS!');</script>"}</span>
          <b className="tracking-[0.235px] text-[#e87500]">{"<script>$('body').html('dashboard name2 XSS!');</script>"}</b>
        </div>
        <Controls />
        <div className="flex gap-[14px] pl-[15px]">
          <ColumnOne />
          <ColumnTwo />
          <ColumnThree />
        </div>
      </main>
    </div>
  );
}
